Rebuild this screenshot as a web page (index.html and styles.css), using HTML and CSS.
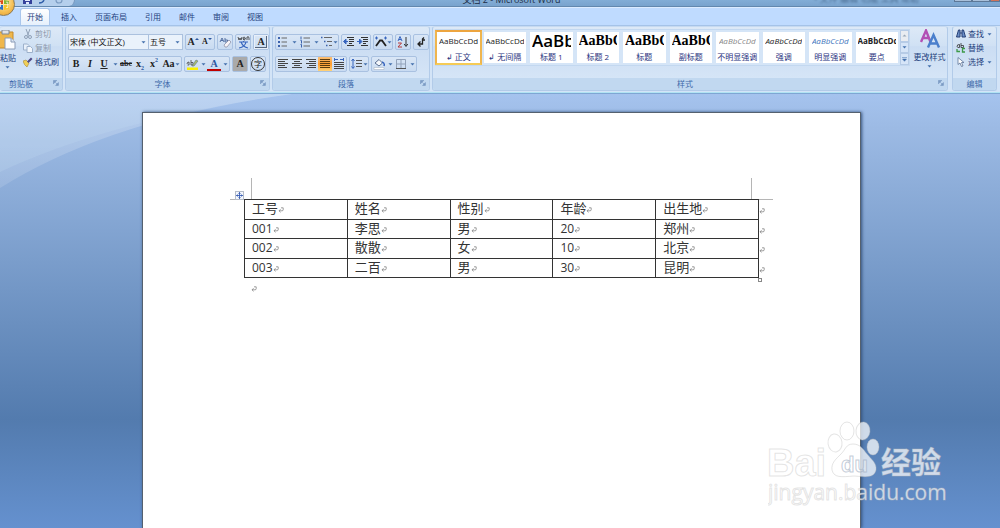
FILE: index.html
```
<!DOCTYPE html>
<html lang="zh-CN">
<head>
<meta charset="utf-8">
<title>文档 2 - Microsoft Word</title>
<link rel="stylesheet" href="styles.css">
</head>
<body>
<svg class="defs" aria-hidden="true">
  <symbol id="mark" viewBox="0 0 6 6"><path d="M3 .8H5.2V2.8Q5.2 3.8 4 3.8H1M2.6 2.2L1 3.8l1.6 1.5" fill="none" stroke="#777" stroke-width=".7"/></symbol>
  <symbol id="arrow" viewBox="0 0 5 3"><path d="M.5.3h4L2.5 2.6z" fill="#4470ad"/></symbol>
  <symbol id="launch" viewBox="0 0 6 6"><path d="M.5 4V.5H4M2.3 2.3l2.4 2.4M5.4 2.6v2.8H2.6z" fill="#7d9cc4" stroke="#7d9cc4" stroke-width=".7"/></symbol>
</svg>

<header class="titlebar">
  <div class="quick">
    <svg width="50" height="7" viewBox="0 0 50 7"><path d="M3 0h9v4H3z" fill="#35429b"/><path d="M5 0h5v1H5zM6 2h3v2H6z" fill="#dfe8fa"/><path d="M19 3q4 0 5-3" fill="none" stroke="#315faa" stroke-width="1.4"/><path d="M36 0q0 3 3 3t3-3" fill="none" stroke="#7c9cc2" stroke-width="1.2"/></svg>
  </div>
  <h1 class="title">文档 2 - Microsoft Word</h1>
  <div class="ghost">• 文件 编辑 功能 工具 帮助</div>
  <div class="winbtns"><button aria-label="最小化"></button><button aria-label="最大化"></button><button class="close" aria-label="关闭"></button></div>
</header>

<button class="orb" aria-label="Office 按钮">
  <svg width="12" height="12" viewBox="0 0 12 12"><path d="M1 2l4-1v4H1z" fill="#dc4a1d"/><path d="M6 1l5 1v3H6z" fill="#82b534"/><path d="M1 6h4v5l-4-1z" fill="#2e72c7"/><path d="M6 6h5v4l-5 1z" fill="#f5c52b"/><path d="M2.5 3v5M8 3.2h1.8v5.4H8" fill="none" stroke="#fff" stroke-width=".7"/></svg>
</button>

<nav class="tabs">
  <button class="tab active">开始</button>
  <button class="tab">插入</button>
  <button class="tab">页面布局</button>
  <button class="tab">引用</button>
  <button class="tab">邮件</button>
  <button class="tab">审阅</button>
  <button class="tab">视图</button>
</nav>

<div class="ribbon">
  <section class="group clip">
    <div class="body clipbody">
      <button class="big paste">
        <svg width="18" height="20" viewBox="0 0 18 20"><path d="M0 2h15v16H0z" fill="#efb74b" stroke="#c58a2a"/><path d="M4 0h7v4H4z" fill="#e0e3e8" stroke="#7c8797"/><path d="M7 8h6l4 4v7H7z" fill="#fbfdff" stroke="#8a9cb8"/><path d="M13 8v4h4" fill="#dce6f4" stroke="#8a9cb8"/></svg>
        <span>粘贴</span>
        <svg class="arr"><use href="#arrow"/></svg>
      </button>
      <div class="stack">
        <button class="line off"><svg width="10" height="10" viewBox="0 0 10 10"><path d="M3 0l2.5 6.5M7 0L4.500 6.500" stroke="#8fa0b6" fill="none"/><circle cx="3" cy="8" r="1.5" fill="none" stroke="#8fa0b6"/><circle cx="7" cy="8" r="1.500" fill="none" stroke="#8fa0b6"/></svg>剪切</button>
        <button class="line off"><svg width="10" height="10" viewBox="0 0 10 10"><path d="M.5 1h4L6 2.500V7H.5z" fill="#e8f0fa" stroke="#9db1cb"/><path d="M4 3.500h3.500L9.500 5.500v4H4z" fill="#f3f7fc" stroke="#9db1cb"/></svg>复制</button>
        <button class="line"><svg width="10" height="10" viewBox="0 0 10 10"><path d="M0 4l3-1 3 3-2 4Q1 8 0 4z" fill="#f0cf57" stroke="#a98a33" stroke-width=".6"/><path d="M4 4.500L8 .5 9.500 2 5.500 6z" fill="#4e4a86"/></svg>格式刷</button>
      </div>
    </div>
    <footer class="label"><span>剪贴板</span><button class="dlg" aria-label="剪贴板选项"><svg width="6" height="6"><use href="#launch"/></svg></button></footer>
  </section>

  <section class="group font">
    <div class="body rows">
      <div class="row">
        <div class="combos">
          <label class="combo name"><select aria-label="字体"><option>宋体 (中文正文)</option></select><svg class="arr"><use href="#arrow"/></svg></label>
          <label class="combo size"><select aria-label="字号"><option>五号</option></select><svg class="arr"><use href="#arrow"/></svg></label>
        </div>
        <div class="chip"><button class="serif" aria-label="增大字体">A<svg width="4" height="10" viewBox="0 0 4 10"><path d="M0 3l2-2 2 2z" fill="#2b57a0"/></svg></button><button class="serif small" aria-label="缩小字体">A<svg width="4" height="10" viewBox="0 0 4 10"><path d="M0 1h4L2 3z" fill="#2b57a0"/></svg></button></div>
        <div class="chip"><button aria-label="清除格式"><svg width="13" height="13" viewBox="0 0 13 13"><path d="M1 6l2-4 2 4M2 4.500h2M6 2v4h2.500V4H6" fill="none" stroke="#49679b" stroke-width=".9"/><path d="M5 9l5-5 2 2-4 5H6z" fill="#f8f3f6" stroke="#8e93aa" stroke-width=".8"/></svg></button></div>
        <div class="chip"><button aria-label="拼音指南"><svg width="13" height="13" viewBox="0 0 13 13"><path d="M1 1l1 3 1-2 1 2 1-3M6 3h2.500q-.5-2-1.500-2T6 3q.5 1 2 1M10 4V1q2-1 2 1v2" fill="none" stroke="#333" stroke-width=".8"/><path d="M2 6h9M6.500 5v1M4 6q2 5 7 6M9 6q-1 5-7 6" fill="none" stroke="#3765be" stroke-width="1.200"/></svg></button></div>
        <div class="chip"><button class="serif boxed" aria-label="字符边框">A</button></div>
      </div>
      <div class="row">
        <div class="chip"><button class="serif">B</button><button class="serif it">I</button><button class="serif un">U</button><button class="drop" aria-label="下划线样式"><svg class="arr"><use href="#arrow"/></svg></button><button class="serif strike">abc</button><button class="serif">x<sub>2</sub></button><button class="serif">x<sup>2</sup></button><button class="serif case">Aa<svg class="arr"><use href="#arrow"/></svg></button></div>
        <div class="chip"><button aria-label="突出显示"><svg width="13" height="13" viewBox="0 0 13 13"><path d="M1 9.500h11V12H1z" fill="#fbf000"/><path d="M1 6q0-2 2-2v3H1.500M5 2v5h2V4.500H5" fill="none" stroke="#444" stroke-width=".8"/><path d="M6 8l4-6 2 1-4 5z" fill="#a9bf6c" stroke="#65738a" stroke-width=".6"/></svg></button><button class="drop" aria-label="突出显示颜色"><svg class="arr"><use href="#arrow"/></svg></button><button class="serif redbar" aria-label="字体颜色">A</button><button class="drop" aria-label="更多颜色"><svg class="arr"><use href="#arrow"/></svg></button></div>
        <div class="chip"><button class="serif shade" aria-label="字符底纹">A</button></div>
        <div class="chip"><button class="ring" aria-label="带圈字符">字</button></div>
      </div>
    </div>
    <footer class="label"><span>字体</span><button class="dlg" aria-label="字体选项"><svg width="6" height="6"><use href="#launch"/></svg></button></footer>
  </section>

  <section class="group para">
    <div class="body rows">
      <div class="row">
        <div class="chip"><button aria-label="项目符号"><svg width="12" height="12" viewBox="0 0 12 12"><path d="M1 2h2M1 6h2M1 10h2" stroke="#3b62ad" stroke-width="1.800"/><path d="M4.500 2H10M4.500 6H10M4.500 10H10" stroke="#666"/></svg></button><button class="drop" aria-label="更多符号"><svg class="arr"><use href="#arrow"/></svg></button><button aria-label="编号"><svg width="12" height="12" viewBox="0 0 12 12"><path d="M2 .5v3M1.500 4.500h1v3M1.500 8.500h1v3" stroke="#3b62ad" fill="none"/><path d="M4.500 2H11M4.500 6H11M4.500 10H11" stroke="#666"/></svg></button><button class="drop" aria-label="更多编号"><svg class="arr"><use href="#arrow"/></svg></button><button class="wide" aria-label="多级列表"><svg width="12" height="12" viewBox="0 0 12 12"><path d="M0 1.500h1.500M3 5.500h1.500M5 9.500h1.500" stroke="#3b62ad" stroke-width="1.600"/><path d="M3 1.500h8M6 5.500h5M8 9.500h3" stroke="#666"/></svg><svg class="arr"><use href="#arrow"/></svg></button></div>
        <div class="chip"><button aria-label="减少缩进"><svg width="12" height="12" viewBox="0 0 12 12"><path d="M4 1.500h7M6 3.500h5M6 5.500h5M6 7.500h3M4 9.500h7" stroke="#333"/><path d="M5 5.500H1M3 3L.5 5.500 3 8z" fill="#3765be" stroke="#3765be"/></svg></button><button aria-label="增加缩进"><svg width="12" height="12" viewBox="0 0 12 12"><path d="M4 1.500h7M6 3.500h5M6 5.500h5M6 7.500h3M4 9.500h7" stroke="#333"/><path d="M0 5.500h4M2.500 3L5 5.500 2.500 8z" fill="#3765be" stroke="#3765be"/></svg></button></div>
        <div class="chip"><button class="wide" aria-label="中文版式"><svg width="12" height="12" viewBox="0 0 12 12"><path d="M1 10L5 4.500h2L11 10" fill="none" stroke="#222" stroke-width="1.800"/><path d="M0 2h3M9 2h3M1.500.5v3M10.500.5v3" stroke="#3765be"/></svg><svg class="arr"><use href="#arrow"/></svg></button></div>
        <div class="chip"><button aria-label="排序"><svg width="12" height="12" viewBox="0 0 12 12"><path d="M1 5l2-4.500L5 5M1.800 3.500h2.400" fill="none" stroke="#3765be"/><path d="M1 7h3.500L1 11h4" fill="none" stroke="#b63a3a"/><path d="M9 1v9M7.200 8L9 10.500 10.800 8" fill="none" stroke="#333"/></svg></button></div>
        <div class="chip"><button aria-label="显示编辑标记"><svg width="12" height="12" viewBox="0 0 12 12"><path d="M9 1.500L7.500 3v5H3.500M5.500 5.500L3 8l2.500 2.500M7 4h3" fill="none" stroke="#222" stroke-width="1.300"/></svg></button></div>
      </div>
      <div class="row">
        <div class="chip"><button aria-label="左对齐"><svg width="12" height="12" viewBox="0 0 12 12"><path d="M1 1.500h10M1 3.500h7M1 5.500h10M1 7.500h7M1 9.500h9" stroke="#444"/></svg></button><button aria-label="居中"><svg width="12" height="12" viewBox="0 0 12 12"><path d="M1 1.500h10M3 3.500h6M1 5.500h10M3 7.500h6M1 9.500h10" stroke="#444"/></svg></button><button aria-label="右对齐"><svg width="12" height="12" viewBox="0 0 12 12"><path d="M1 1.500h10M4 3.500h7M1 5.500h10M4 7.500h7M2 9.500h9" stroke="#444"/></svg></button><button class="on" aria-label="两端对齐"><svg width="12" height="12" viewBox="0 0 12 12"><path d="M1 1.500h10M1 3.500h10M1 5.500h10M1 7.500h10M1 9.500h10" stroke="#5b3d10"/></svg></button><button aria-label="分散对齐"><svg width="12" height="12" viewBox="0 0 12 12"><path d="M1 4.500h10M1 6.500h10M1 8.500h10M1 10.500h10" stroke="#444"/><path d="M1.500 0v3M10.500 0v3M2 1.500h3M7 1.500h3" stroke="#3765be"/></svg></button></div>
        <div class="chip"><button class="wide" aria-label="行距"><svg width="12" height="12" viewBox="0 0 12 12"><path d="M5 2.500h6M5 5.500h6M5 8.500h6" stroke="#555"/><path d="M2 1v9M.5 3L2 1l1.500 2M.5 8.500L2 10.500l1.500-2" fill="none" stroke="#3765be"/></svg><svg class="arr"><use href="#arrow"/></svg></button></div>
        <div class="chip"><button aria-label="底纹"><svg width="12" height="12" viewBox="0 0 12 12"><path d="M2 5l4-3.500L9.500 5 6 8z" fill="#f5f8fc" stroke="#5b6f91"/><path d="M9 4q3 1 2 4" fill="none" stroke="#3765be" stroke-width="1.500"/><path d="M1 9.500h10v2H1z" fill="#fff" stroke="#a3adbb" stroke-width=".5"/></svg></button><button class="drop" aria-label="底纹颜色"><svg class="arr"><use href="#arrow"/></svg></button><button aria-label="边框"><svg width="12" height="12" viewBox="0 0 12 12"><path d="M1.500 1.500h9v9h-9zM6 1.500v9M1.500 6h9" fill="none" stroke="#93a3bb"/><path d="M1 10.500h10" stroke="#555"/></svg></button><button class="drop" aria-label="边框样式"><svg class="arr"><use href="#arrow"/></svg></button></div>
      </div>
    </div>
    <footer class="label"><span>段落</span><button class="dlg" aria-label="段落选项"><svg width="6" height="6"><use href="#launch"/></svg></button></footer>
  </section>

  <section class="group styles">
    <div class="body stylebody">
      <div class="gallery">
        <button class="style selected"><span class="prev">AaBbCcDd</span><span>↲ 正文</span></button>
        <button class="style"><span class="prev">AaBbCcDd</span><span>↲ 无间隔</span></button>
        <button class="style"><span class="prev h1">AaBb</span><span>标题 1</span></button>
        <button class="style"><span class="prev h2">AaBbC</span><span>标题 2</span></button>
        <button class="style"><span class="prev h2">AaBbC</span><span>标题</span></button>
        <button class="style"><span class="prev h2">AaBbC</span><span>副标题</span></button>
        <button class="style"><span class="prev it gray">AaBbCcDd</span><span>不明显强调</span></button>
        <button class="style"><span class="prev it">AaBbCcDd</span><span>强调</span></button>
        <button class="style"><span class="prev it blue">AaBbCcDd</span><span>明显强调</span></button>
        <button class="style"><span class="prev bold">AaBbCcDd</span><span>要点</span></button>
        <div class="scroll"><button class="dim" aria-label="上"><svg width="5" height="3" viewBox="0 0 5 3"><path d="M.5 2.600h4L2.500.4z" fill="#9aa7b8"/></svg></button><button aria-label="下"><svg class="arr"><use href="#arrow"/></svg></button><button aria-label="更多样式"><svg width="5" height="5" viewBox="0 0 5 5"><path d="M0 .5h5M.5 2h4L2.500 4.300z" fill="#4470ad" stroke="#4470ad" stroke-width=".5"/></svg></button></div>
      </div>
      <button class="big change">
        <svg width="20" height="20" viewBox="0 0 20 20"><path d="M1 13L6 1.500 10.500 13M3 9h6" fill="none" stroke="#b250b5" stroke-width="2.400"/><path d="M8 18.500L13.500 6 19 18.500M10.500 14.500h7" fill="none" stroke="#4a7fcc" stroke-width="2.400"/></svg>
        <span>更改样式</span>
        <svg class="arr"><use href="#arrow"/></svg>
      </button>
    </div>
    <footer class="label"><span>样式</span><button class="dlg" aria-label="样式选项"><svg width="6" height="6"><use href="#launch"/></svg></button></footer>
  </section>

  <section class="group edit">
    <div class="body stack">
      <button class="line"><svg width="10" height="10" viewBox="0 0 10 10"><path d="M2.500 1L.5 8H4V1zM7.500 1l2 7H6V1zM4 4h2" fill="#6c8fc8" stroke="#263f75"/></svg>查找<svg class="arr"><use href="#arrow"/></svg></button>
      <button class="line"><svg width="10" height="10" viewBox="0 0 10 10"><path d="M1 4q0-3 2.500-2.500V4.500H1.500M5 0v4.500h2.500V2.500H5" fill="none" stroke="#333" stroke-width=".8"/><path d="M1 6v2.500h3M9 5.500H6.500V9H9" fill="none" stroke="#3d9a48" stroke-width="1.300"/></svg>替换</button>
      <button class="line"><svg width="10" height="10" viewBox="0 0 10 10"><path d="M2 .5v7L4 6l1.500 3.500L7 9 5.500 5.500H8z" fill="#fff" stroke="#5d7398" stroke-width=".8"/></svg>选择<svg class="arr"><use href="#arrow"/></svg></button>
    </div>
    <footer class="label"><span>编辑</span></footer>
  </section>
</div>

<main class="workspace">
  <svg class="swoosh" width="300" height="96" viewBox="0 0 300 96" aria-hidden="true">
    <defs><linearGradient id="sw" x1="0" y1="0" x2="0" y2="1"><stop offset="0" stop-color="#fff" stop-opacity=".24"/><stop offset="1" stop-color="#fff" stop-opacity=".12"/></linearGradient></defs>
    <path d="M0 0H292Q110 25 0 94z" fill="url(#sw)"/><path d="M0 0H292Q110 26 0 78z" fill="#c9e2f5" fill-opacity=".2"/>
  </svg>
  <article class="page">
    <div class="corners"><i></i><i></i></div>
    <div class="tablewrap">
      <button class="move" aria-label="移动表格"><svg width="7" height="7" viewBox="0 0 7 7"><path d="M3.500 0v7M0 3.500h7M2.500 1.500h2M2.500 5.500h2M1.500 2.500v2M5.500 2.500v2" stroke="#3b5fb5" stroke-width=".9"/></svg></button>
      <table>
        <thead><tr><th>工号<svg class="mk"><use href="#mark"/></svg></th><th>姓名<svg class="mk"><use href="#mark"/></svg></th><th>性别<svg class="mk"><use href="#mark"/></svg></th><th>年龄<svg class="mk"><use href="#mark"/></svg></th><th>出生地<svg class="mk"><use href="#mark"/></svg><svg class="mk end"><use href="#mark"/></svg></th></tr></thead>
        <tbody>
        <tr><td>001<svg class="mk"><use href="#mark"/></svg></td><td>李思<svg class="mk"><use href="#mark"/></svg></td><td>男<svg class="mk"><use href="#mark"/></svg></td><td>20<svg class="mk"><use href="#mark"/></svg></td><td>郑州<svg class="mk"><use href="#mark"/></svg><svg class="mk end"><use href="#mark"/></svg></td></tr>
        <tr><td>002<svg class="mk"><use href="#mark"/></svg></td><td>散散<svg class="mk"><use href="#mark"/></svg></td><td>女<svg class="mk"><use href="#mark"/></svg></td><td>10<svg class="mk"><use href="#mark"/></svg></td><td>北京<svg class="mk"><use href="#mark"/></svg><svg class="mk end"><use href="#mark"/></svg></td></tr>
        <tr><td>003<svg class="mk"><use href="#mark"/></svg></td><td>二百<svg class="mk"><use href="#mark"/></svg></td><td>男<svg class="mk"><use href="#mark"/></svg></td><td>30<svg class="mk"><use href="#mark"/></svg></td><td>昆明<svg class="mk"><use href="#mark"/></svg><svg class="mk end"><use href="#mark"/></svg></td></tr>
        </tbody>
      </table>
      <i class="grip"></i>
    </div>
    <p class="para-end"><svg class="mk"><use href="#mark"/></svg></p>
  </article>
  <svg class="logo" width="184" height="92" viewBox="0 0 184 92">
    <g class="wfill">
      <ellipse cx="67" cy="24" rx="7" ry="9" transform="rotate(-8 67 24)"/>
      <ellipse cx="79" cy="12" rx="7" ry="9"/>
      <ellipse cx="95" cy="12" rx="7" ry="9" transform="rotate(6 95 12)"/>
      <ellipse cx="105" cy="28" rx="6" ry="8"/>
      <path d="M85 25c7 0 10 5 14 10s10 9 9 16c-2 8-9 7-22 6-13 1-20 2-22-6-1-7 4-11 9-16s5-10 12-10z"/>
      <text x="-1" y="57" class="wbai">Bai</text>
      <text x="113" y="54" class="wjy">经验</text>
      <text x="0" y="81" class="wurl">jingyan.baidu.com</text>
    </g>
    <text x="73" y="53" class="wdu">du</text>
  </svg>
</main>
</body>
</html>
```

FILE: styles.css
```
* { box-sizing: border-box; }
body {
  margin: 0;
  height: 100vh;
  display: flex;
  flex-direction: column;
  overflow: hidden;
  position: relative;
  background: #bfdbff;
  font: 8px/12px "Open Sans", "Noto Sans CJK SC", sans-serif;
  color: #1e3f7d;
}
button, select { font: inherit; color: inherit; border: 0; background: none; padding: 0; margin: 0; }
svg { display: block; flex: none; }
.defs { position: absolute; width: 0; height: 0; }
.arr { width: 5px; height: 3px; }

/* title bar */
.titlebar {
  height: 7px;
  flex: none;
  display: flex;
  align-items: flex-end;
  overflow: hidden;
  background: linear-gradient(#82add6, #79a3cd);
  border-bottom: 1px solid #6388ae;
}
.quick { width: 75px; height: 6px; padding-left: 20px; background: #b5cfec; border-radius: 0 0 10px 0; border-right: 1px solid #7797bd; overflow: hidden; }
.title { flex: 1; margin: 0; text-align: center; font-weight: 400; font-size: 9px; line-height: 12px; color: #1b2c44; padding-left: 134px; }
.ghost { width: 140px; line-height: 14px; color: #4a6b90; filter: blur(1px); font-size: 9px; white-space: nowrap; }
.winbtns { display: flex; }
.winbtns button { width: 18px; height: 3px; align-self: flex-start; background: #a9c0da; border: 1px solid #5d7897; border-top: 0; margin-bottom: 4px; }
.winbtns .close { background: #cf7259; width: 10px; }
.orb {
  position: absolute;
  left: -8px; top: -7px;
  width: 23px; height: 23px;
  border-radius: 50%;
  border: 1px solid #8b7a55;
  background: radial-gradient(circle at 50% 40%, #fff3c0, #f4bd50 60%, #e09a35);
  display: flex; align-items: center; justify-content: center;
}

/* tabs */
.tabs { display: flex; flex: none; height: 18px; padding-left: 20px; border-top: 1px solid #dcebff; }
.tab { padding: 0 7px; height: 17px; line-height: 15px; margin-right: 4px; }
.tab.active { background: linear-gradient(#fff, #e6f0fc); border: 1px solid #a9c6ec; border-bottom: 0; border-radius: 3px 3px 0 0; padding: 0 6px; line-height: 14px; }

/* ribbon */
.ribbon {
  flex: none;
  display: flex;
  gap: 2px;
  height: 69px;
  padding: 0 3px 2px 0;
  background: #d3e4f7;
  border-top: 1px solid #a5c3e8;
  border-bottom: 1px solid #7ea6d3;
  box-shadow: inset 0 -1px #b0e3f3;
  overflow: hidden;
}
.group {
  display: flex;
  flex-direction: column;
  border: 1px solid #b2cbe9;
  border-top-color: #c6daf1;
  border-radius: 3px;
  background: linear-gradient(#dde9f7 0, #d0e1f4 30%, #cbddf3 31%, #d9e8f8);
  overflow: hidden;
}
.clip { width: 63px; border-left: 0; }
.font { width: 205px; }
.para { width: 158px; }
.styles { flex: 1; min-width: 0; }
.edit { width: 45px; margin-left: 2px; }
.body { flex: 1; min-height: 0; }
.label { position: relative; height: 12px; line-height: 11px; text-align: center; background: #c1d8f0; color: #3e6aaa; }
.label span { padding-right: 10px; }
.clip .label span { padding-right: 20px; }
.edit .label span { padding: 0; }
.dlg { position: absolute; right: 3px; top: 2px; }
.clipbody { display: flex; gap: 7px; }
.big { display: flex; flex-direction: column; align-items: center; padding-top: 3px; gap: 2px; white-space: nowrap; }
.paste { width: 16px; align-items: flex-end; }
.paste .arr { margin-right: 6px; }
.stack { display: flex; flex-direction: column; }
.line { display: flex; align-items: center; gap: 2px; height: 14px; white-space: nowrap; }
.line .arr { margin-left: 1px; }
.off { color: #8d99aa; }
.edit .stack { padding-left: 3px; }

.rows { padding: 7px 0 0 2px; display: flex; flex-direction: column; gap: 6px; }
.row { display: flex; gap: 2px; height: 16px; }
.chip { display: flex; border: 1px solid #a9c1e1; border-radius: 2px; background: linear-gradient(#d9e6f6, #c9dbf1); height: 16px; }
.chip button { width: 14px; display: flex; align-items: center; justify-content: center; overflow: hidden; }
.chip .drop { width: 8px; }
.chip .wide { width: 18px; }
.chip .case { width: 20px; }
.combos { display: flex; }
.combo { position: relative; border: 1px solid #abc1de; background: #eaf2fb; height: 16px; }
.combo select { appearance: none; width: 100%; height: 14px; line-height: 14px; padding-left: 1px; color: #111; display: block; }
.combo .arr { position: absolute; right: 2px; top: 6px; }
.name { width: 81px; }
.size { width: 34px; border-left: 0; }
.serif { font-family: "Liberation Serif", serif; font-weight: 700; font-size: 10px; color: #222; }
.small { font-size: 8px; }
.it { font-style: italic; }
.un { text-decoration: underline; }
.chip .strike { font-size: 8px; text-decoration: line-through; }
.serif sub, .serif sup { font-size: 6px; line-height: 6px; color: #2b57a0; }
.serif sub { align-self: flex-end; }
.serif sup { align-self: flex-start; }
.boxed { box-shadow: inset 0 0 0 1px #e8eff9, inset -1px -1px 0 1px #55657d; }
.redbar { box-shadow: inset 0 -2px #c00000; color: #2b57a0; }
.shade { background: #aaa; }
.chip .ring { border: 1px solid #333; border-radius: 50%; color: #222; }
.on { background: linear-gradient(#f9c078, #ff9c2e 50%, #ffd37a); }

.stylebody { display: flex; padding: 2px 0 12px 2px; gap: 2px; }
.gallery { flex: 1; min-width: 0; display: flex; background: #d5e5f7; border: 1px solid #c3d8f0; border-left: 0; }
.style { flex: 1; min-width: 0; display: flex; flex-direction: column; align-items: center; background: #fff; border: 2px solid #d5e5f7; overflow: hidden; white-space: nowrap; color: #26307c; padding: 0 2px; justify-content: space-between; }
.selected { border-color: #eda53f #efb54e #f5cb56; }
.prev { height: 18px; line-height: 18px; font-size: 8px; color: #222; overflow: hidden; max-width: 100%; }
.h1 { font-size: 17px; font-weight: 600; color: #000; }
.h2 { font-family: "Liberation Serif", serif; font-size: 14px; font-weight: 700; color: #000; }
.gray { color: #888; }
.blue { color: #4176bd; }
.bold { font-weight: 700; }
.scroll { width: 9px; display: flex; flex-direction: column; }
.scroll button { flex: 1; display: flex; align-items: center; justify-content: center; border: 1px solid #b6cbe6; background: #d6e5f8; }
.scroll .dim { background: #e9ecf1; }
.change { width: 35px; padding: 0; }

/* document */
.workspace {
  flex: 1;
  min-height: 0;
  position: relative;
  display: flex;
  padding: 18px 139px 0 142px;
  background: linear-gradient(#a5c3ee 0, #9cbae4 8%, #7397c6 45%, #537bae 75%, #6591cf 100%);
}
.swoosh { position: absolute; left: 0; top: 0; }
.page {
  position: relative;
  flex: 1;
  background: #fff;
  border: 1px solid #55616f;
  border-bottom: 0;
  box-shadow: 1px 0 3px #34507a;
  padding: 65px 101px 0;
}
.corners { display: flex; justify-content: space-between; margin: 0 -14px; height: 22px; }
.corners i { width: 22px; border: solid #b5b5b5; border-width: 0 1px 1px 0; }
.corners i:last-child { border-width: 0 0 1px 1px; }
.tablewrap { position: relative; margin-top: -1px; }
.move { position: absolute; left: -9px; top: -8px; width: 9px; height: 9px; border: 1px solid #b6bdc9; background: #f4f7fc; z-index: 1; }
.grip { position: absolute; right: -3px; bottom: -4px; width: 4px; height: 4px; border: 1px solid #888; background: #fff; }
table { width: 100%; border-collapse: collapse; table-layout: fixed; color: #333; font: 12px/17px "Open Sans", "Noto Sans CJK SC", sans-serif; }
th, td { position: relative; border: 1px solid #333; padding: 0 0 0 7px; text-align: left; vertical-align: top; font-weight: 400; height: 19px; line-height: 17px; }
tr:nth-child(odd) th, tr:nth-child(even) td { height: 20px; }
th, td:nth-child(2), td:nth-child(3), td:last-child { font-size: 13px; }
.mk { display: inline-block; width: 6px; height: 6px; }
.end { position: absolute; right: -7px; top: 8px; }
.para-end { margin: 0; padding: 5px 0 0 7px; }

/* watermark */
.logo { position: absolute; right: 48px; bottom: 17px; }
.wfill { fill: #fff; fill-opacity: .72; stroke: #bbb; stroke-opacity: .4; }
.wbai { font: 700 38px "Liberation Sans", sans-serif; }
.wdu { font: 700 22px "Liberation Sans", sans-serif; fill: #fff; fill-opacity: .3; stroke: #9aa9bd; stroke-opacity: .6; }
.wjy { font: 700 30px "Noto Sans CJK SC", sans-serif; }
.wurl { font: 400 21px "Open Sans", sans-serif; }
```
